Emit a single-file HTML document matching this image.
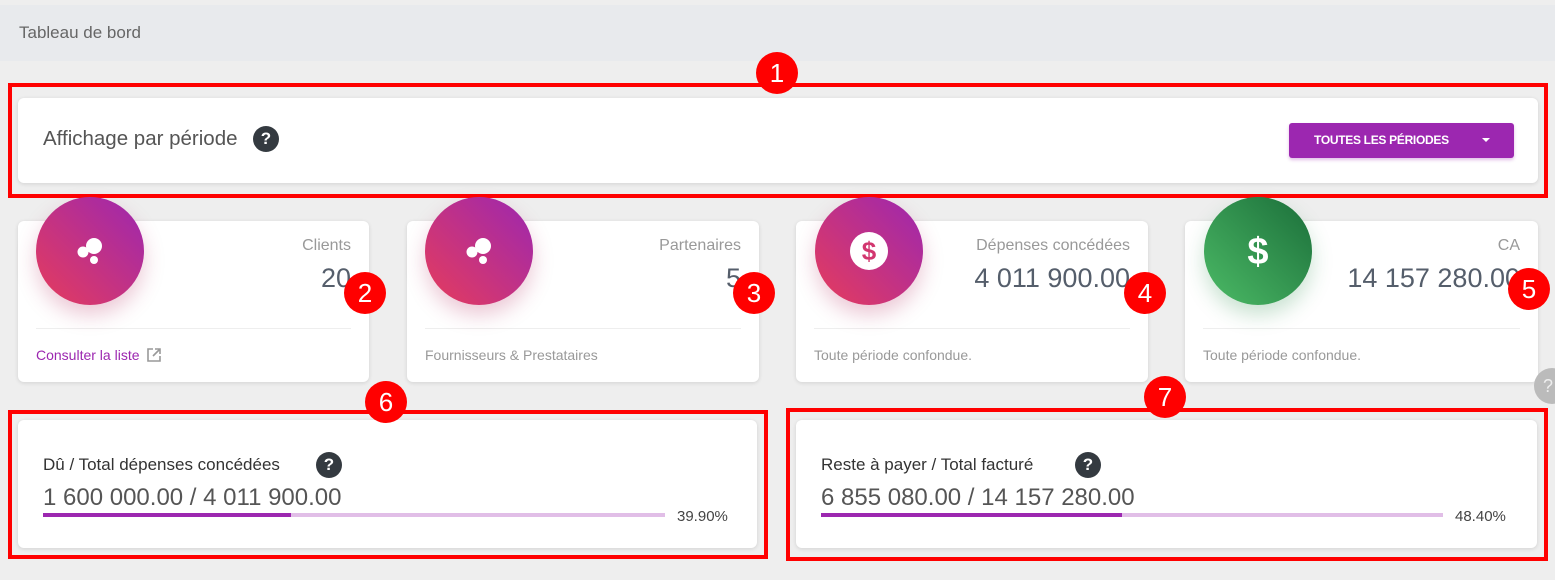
<!DOCTYPE html>
<html><head><meta charset="utf-8"><style>
*{box-sizing:border-box;margin:0;padding:0}
body{width:1555px;height:580px;background:#eeeeee;font-family:"Liberation Sans",sans-serif;position:relative;overflow:hidden}
.abs{position:absolute}
.card{position:absolute;background:#fff;border-radius:6px;box-shadow:0 1px 4px rgba(0,0,0,.12)}
.red{position:absolute;border:4px solid #f00}
.badge{position:absolute;width:42px;height:42px;border-radius:50%;background:#f00;color:#fff;font-size:26px;text-align:center;line-height:42px}
.q{position:absolute;width:26px;height:26px;border-radius:50%;background:#343a40;color:#fff;font-weight:bold;font-size:17px;text-align:center;line-height:26px}
.ic{position:absolute;width:108px;height:108px;border-radius:50%;background:linear-gradient(225deg,#9c27b0,#e63c5c);box-shadow:0 10px 20px rgba(180,40,90,.25)}
.ttl{position:absolute;right:18px;top:16px;font-size:16px;color:#999}
.val{position:absolute;right:18px;top:42px;font-size:27px;color:#555e6b}
.div{position:absolute;left:18px;right:18px;top:107px;border-top:1px solid #eee}
.ft{position:absolute;left:18px;top:126px;font-size:14px;color:#999}
</style></head><body>
<div class="abs" style="left:0;top:5px;width:1555px;height:56px;background:#e8eaed"></div>
<div class="abs" style="left:19px;top:23px;font-size:17px;color:#666">Tableau de bord</div>

<div class="red" style="left:8px;top:83px;width:1540px;height:115px"></div>
<div class="card" style="left:18px;top:98px;width:1520px;height:85px">
 <div class="abs" style="left:25px;top:29px;font-size:20.5px;color:#555">Affichage par période</div>
 <div class="q" style="left:235px;top:28px;left:235px">?</div>
 <div class="abs" style="left:1271px;top:25px;width:225px;height:35px;background:#9c27b0;border-radius:3px;box-shadow:0 2px 3px rgba(156,39,176,.3);color:#fff;font-size:12px;font-weight:bold;line-height:35px;padding-left:25px;letter-spacing:-.3px">TOUTES LES PÉRIODES<span style="position:absolute;left:193px;top:15px;border:4px solid transparent;border-top:4px solid #fff;border-bottom:0"></span></div>
</div>
<div class="badge" style="left:756px;top:52px">1</div>

<div class="card" style="left:18px;top:221px;width:351px;height:161px">
 <div class="ttl">Clients</div><div class="val">20</div><div class="div"></div>
 <div class="ft" style="color:#9c27b0">Consulter la liste <svg width="16" height="16" viewBox="0 0 16 16" style="vertical-align:-3px;margin-left:3px"><path d="M7 2H2v12h12V9M9 2h5v5M14 2L7 9" fill="none" stroke="#999" stroke-width="1.6"/></svg></div>
</div>
<div class="card" style="left:407px;top:221px;width:352px;height:161px">
 <div class="ttl">Partenaires</div><div class="val">5</div><div class="div"></div>
 <div class="ft">Fournisseurs &amp; Prestataires</div>
</div>
<div class="card" style="left:796px;top:221px;width:352px;height:161px">
 <div class="ttl">Dépenses concédées</div><div class="val">4 011 900.00</div><div class="div"></div>
 <div class="ft">Toute période confondue.</div>
</div>
<div class="card" style="left:1185px;top:221px;width:353px;height:161px">
 <div class="ttl">CA</div><div class="val">14 157 280.00</div><div class="div"></div>
 <div class="ft">Toute période confondue.</div>
</div>

<div class="ic" style="left:36px;top:197px"><svg width="108" height="108"><circle cx="47" cy="55" r="5.5" fill="#fff"/><circle cx="58" cy="49" r="8" fill="#fff"/><circle cx="58" cy="63" r="4" fill="#fff"/></svg></div>
<div class="ic" style="left:425px;top:197px"><svg width="108" height="108"><circle cx="47" cy="55" r="5.5" fill="#fff"/><circle cx="58" cy="49" r="8" fill="#fff"/><circle cx="58" cy="63" r="4" fill="#fff"/></svg></div>
<div class="ic" style="left:815px;top:197px"><svg width="108" height="108"><circle cx="54" cy="54" r="19" fill="#fff"/><text x="54" y="63" text-anchor="middle" font-size="26" font-weight="bold" fill="#d2366f" font-family="Liberation Sans">$</text></svg></div>
<div class="ic" style="left:1204px;top:197px;background:linear-gradient(225deg,#1b6e3a,#4cbb66);box-shadow:0 10px 20px rgba(40,140,70,.25)"><svg width="108" height="108"><text x="54" y="67" text-anchor="middle" font-size="38" font-weight="bold" fill="#fff" font-family="Liberation Sans">$</text></svg></div>

<div class="badge" style="left:344px;top:272px">2</div>
<div class="badge" style="left:733px;top:272px">3</div>
<div class="badge" style="left:1124px;top:272px">4</div>
<div class="badge" style="left:1508px;top:268px">5</div>

<div class="abs" style="left:1534px;top:368px;width:36px;height:36px;border-radius:50%;background:#bbb;color:#eee;font-size:18px;line-height:36px;padding-left:9px">?</div>

<div class="red" style="left:8px;top:410px;width:760px;height:149px"></div>
<div class="card" style="left:18px;top:420px;width:739px;height:128px">
 <div class="abs" style="left:25px;top:35px;font-size:17px;color:#333">Dû / Total dépenses concédées</div>
 <div class="q" style="left:298px;top:32px">?</div>
 <div class="abs" style="left:25px;top:64px;font-size:24px;color:#555">1 600 000.00 / 4 011 900.00</div>
 <div class="abs" style="left:25px;top:93px;width:622px;height:4px;background:#e1bee7"><div style="width:248px;height:4px;background:#9c27b0"></div></div>
 <div class="abs" style="left:659px;top:88px;font-size:15px;color:#444">39.90%</div>
</div>
<div class="badge" style="left:365px;top:381px">6</div>

<div class="red" style="left:786px;top:408px;width:762px;height:153px"></div>
<div class="card" style="left:796px;top:420px;width:741px;height:128px">
 <div class="abs" style="left:25px;top:35px;font-size:17px;color:#333">Reste à payer / Total facturé</div>
 <div class="q" style="left:279px;top:32px">?</div>
 <div class="abs" style="left:25px;top:64px;font-size:24px;color:#555">6 855 080.00 / 14 157 280.00</div>
 <div class="abs" style="left:25px;top:93px;width:622px;height:4px;background:#e1bee7"><div style="width:301px;height:4px;background:#9c27b0"></div></div>
 <div class="abs" style="left:659px;top:88px;font-size:15px;color:#444">48.40%</div>
</div>
<div class="badge" style="left:1144px;top:376px">7</div>
</body></html>
